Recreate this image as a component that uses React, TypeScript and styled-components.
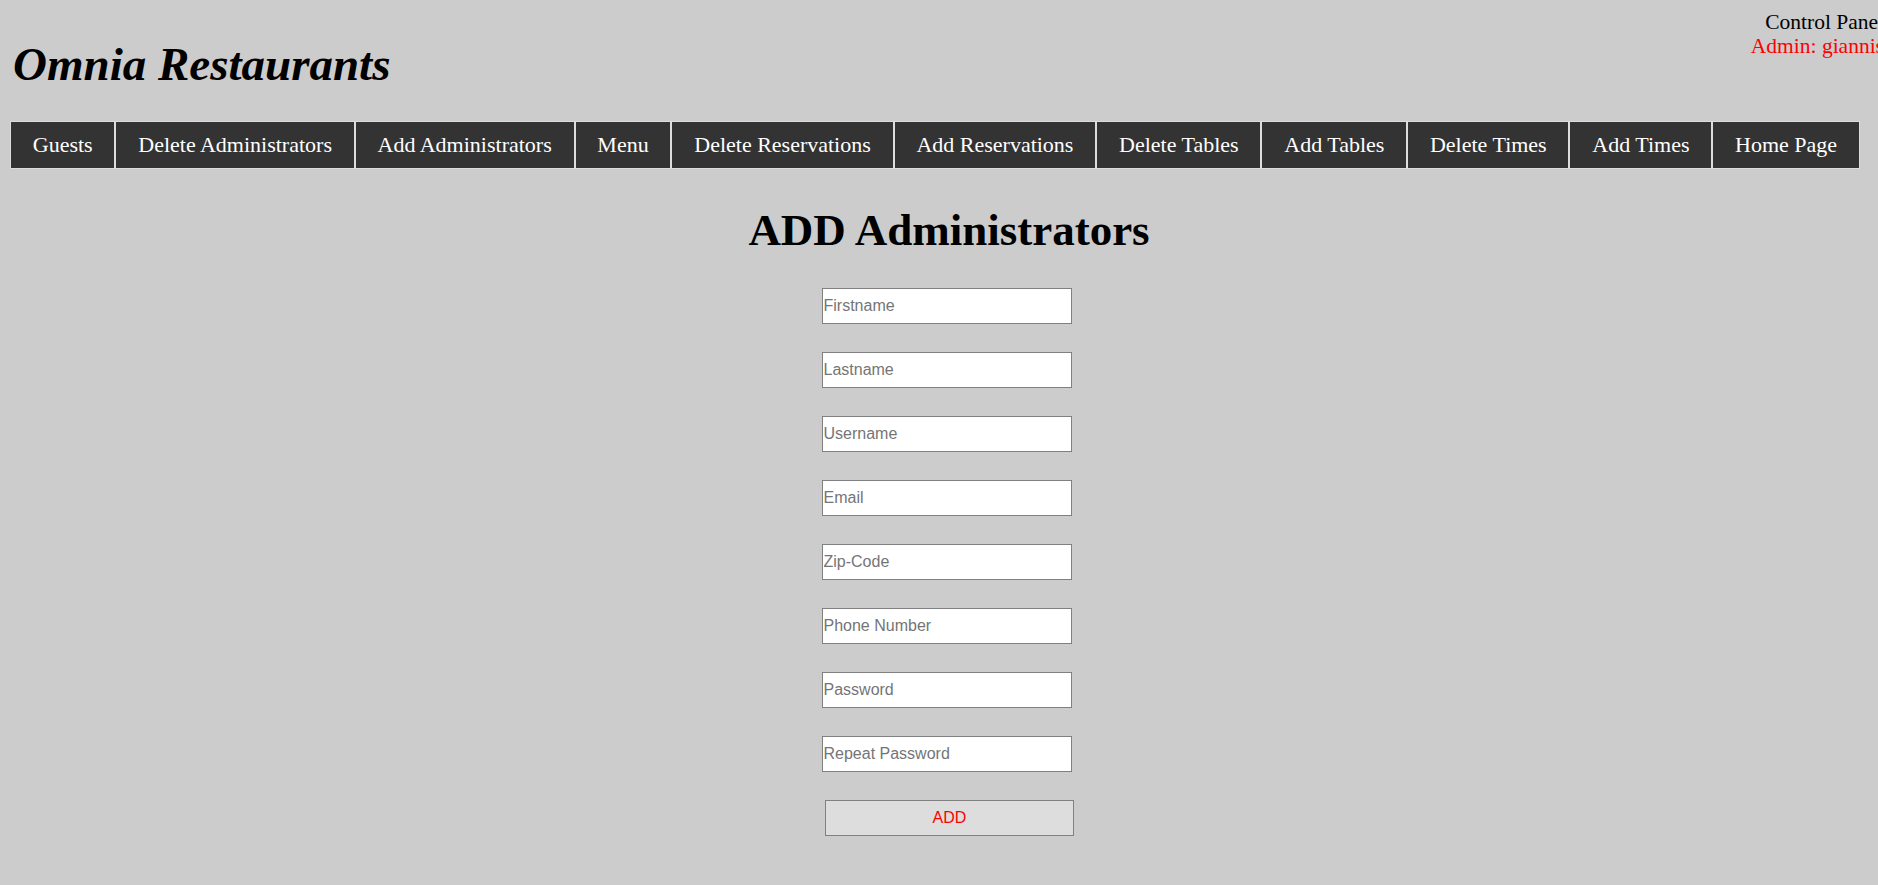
import styled, { createGlobalStyle } from "styled-components";

const GlobalStyle = createGlobalStyle`
body {
  margin: 0;
  background: #cccccc;
  font-family: "Liberation Serif", "Times New Roman", serif;
  overflow-x: hidden;
}
`

const Page = styled.div`
display: flex;
flex-direction: column;
`
const Header = styled.header`
display: flex;
justify-content: space-between;
align-items: flex-start;
`
const Title = styled.h1`
font-size: 47px;
font-style: italic;
font-weight: bold;
line-height: 56px;
margin: 36px 0 0 13px;
`
const UserBox = styled.div`
display: flex;
flex-direction: column;
align-items: flex-end;
margin: 10px -6px 0 0;
font-size: 21.5px;
line-height: 24px;
white-space: nowrap;
`

interface LineProps {
  color?: string;
}

const UserLine = styled.span<LineProps>`
color: ${props => props.color || 'black'};
`

const NavBar = styled.nav`
display: flex;
margin: 29px 0 0 10px;
`
const NavItem = styled.a`
display: block;
background: #333333;
color: white;
border: 1px solid #dddddd;
padding: 0 21.8px;
font-size: 22px;
line-height: 46px;
white-space: nowrap;
text-decoration: none;
cursor: pointer;
`

const Main = styled.main`
display: flex;
flex-direction: column;
align-items: center;
padding-left: 20px;
`
const Heading = styled.h2`
font-size: 45px;
font-weight: bold;
line-height: 52px;
margin: 35px 0 0 0;
`
const Form = styled.form`
display: flex;
flex-direction: column;
align-items: center;
gap: 28px;
margin-top: 32px;
`
const Field = styled.input`
box-sizing: border-box;
width: 250px;
height: 36px;
margin-right: 5px;
padding: 0 1px;
background: white;
border: 1px solid #808080;
font-family: "Liberation Sans", Arial, sans-serif;
font-size: 16px;

&::placeholder {
  color: #757575;
}
`
const AddButton = styled.button`
box-sizing: border-box;
width: 249px;
height: 36px;
margin-left: 1px;
background: #dddddd;
border: 1px solid #808080;
color: red;
font-family: "Liberation Sans", Arial, sans-serif;
font-size: 16px;
`

const links = [
  'Guests',
  'Delete Administrators',
  'Add Administrators',
  'Menu',
  'Delete Reservations',
  'Add Reservations',
  'Delete Tables',
  'Add Tables',
  'Delete Times',
  'Add Times',
  'Home Page',
]

const fields = [
  { name: 'firstname', label: 'Firstname', type: 'text' },
  { name: 'lastname', label: 'Lastname', type: 'text' },
  { name: 'username', label: 'Username', type: 'text' },
  { name: 'email', label: 'Email', type: 'email' },
  { name: 'zip', label: 'Zip-Code', type: 'text' },
  { name: 'phone', label: 'Phone Number', type: 'text' },
  { name: 'password', label: 'Password', type: 'password' },
  { name: 'repeat', label: 'Repeat Password', type: 'password' },
]

export default function App() {
  return (
    <Page>
      <GlobalStyle />
      <Header>
        <Title>Omnia Restaurants</Title>
        <UserBox>
          <UserLine>Control Panel</UserLine>
          <UserLine color="red">Admin: giannis</UserLine>
        </UserBox>
      </Header>

      <NavBar>
        {links.map(l => (
          <NavItem key={l}>{l}</NavItem>
        ))}
      </NavBar>

      <Main>
        <Heading>ADD Administrators</Heading>
        <Form onSubmit={e => e.preventDefault()}>
          {fields.map(f => (
            <Field key={f.name} name={f.name} type={f.type} placeholder={f.label} />
          ))}
          <AddButton type="submit">ADD</AddButton>
        </Form>
      </Main>
    </Page>
  );
}
